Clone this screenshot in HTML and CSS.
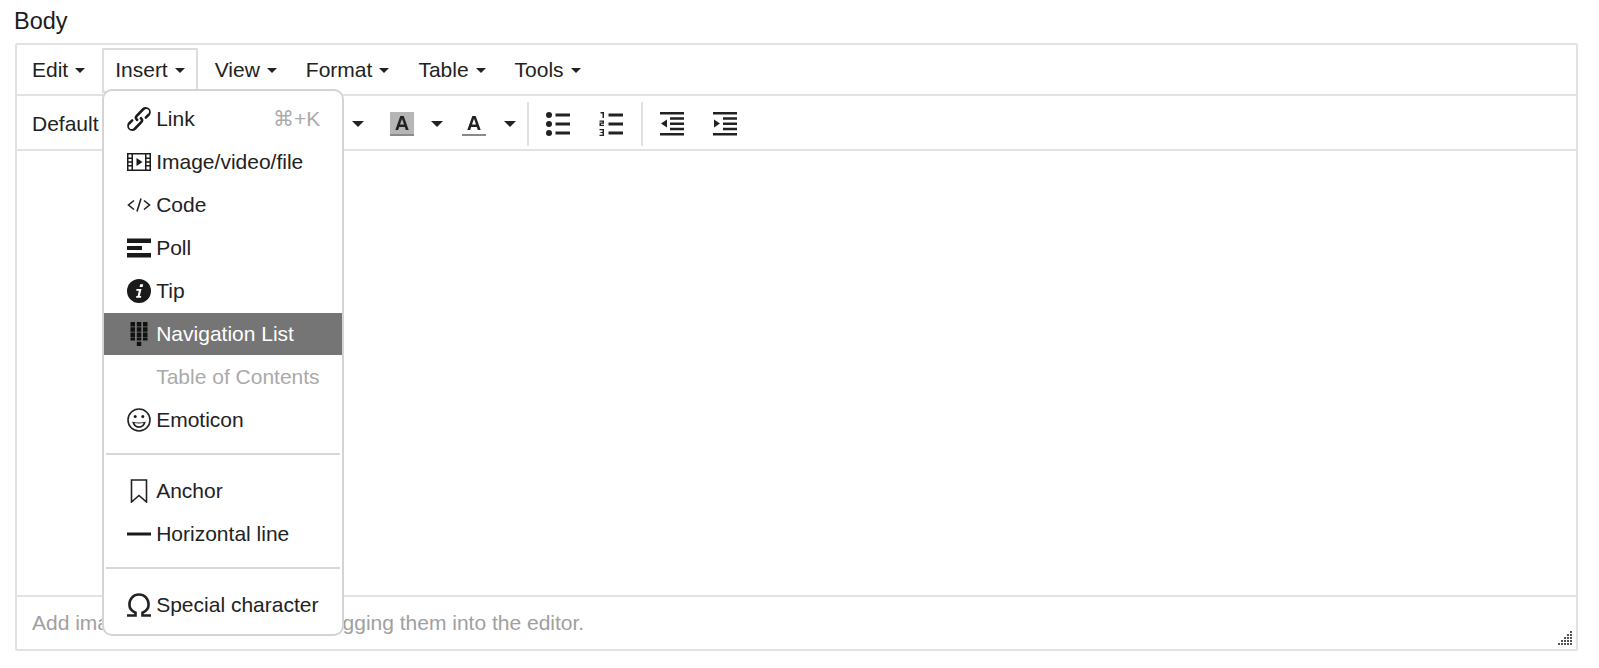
FILE: index.html
```html
<!DOCTYPE html>
<html lang="en">
<head>
<meta charset="utf-8">
<title>Body editor</title>
<link rel="stylesheet" href="styles.css">
</head>
<body>
<label class="field-label">Body</label>
<div class="editor">
  <div class="menubar">
    <button class="mb-btn">Edit<i class="caret"></i></button>
    <div class="mb-wrap">
      <button class="mb-btn active">Insert<i class="caret"></i></button>
      <div class="menu">
        <div class="item"><svg class="ico" viewBox="3 3 18 18"><path d="M6.2 12.3a1 1 0 0 1 1.4 1.4l-2 2a2 2 0 1 0 2.6 2.8l4.8-4.8a1 1 0 0 0 0-1.4 1 1 0 1 1 1.4-1.3 2.9 2.9 0 0 1 0 4L9.6 20a3.9 3.9 0 0 1-5.5-5.5l2-2zm11.6-.6a1 1 0 0 1-1.4-1.4l2-2a2 2 0 1 0-2.6-2.8L11 10.3a1 1 0 0 0 0 1.4A1 1 0 1 1 9.6 13a2.9 2.9 0 0 1 0-4L14.4 4a3.9 3.9 0 0 1 5.5 5.500l-2 2z"/></svg><span class="lbl">Link</span><span class="short">⌘+K</span></div>
        <div class="item"><svg class="ico" viewBox="0 0 24 24"><path fill-rule="evenodd" d="M0 3h24v18H0zM1.5 4.5v3h3v-3zm0 4.5v2.2h3V9zm0 3.7V15h3v-2.3zm0 3.8v3h3v-3zM6 4.5v15h12v-15zm13.500 0v3h3v-3zm0 4.500v2.2h3V9zm0 3.700V15h3v-2.300zm0 3.800v3h3v-3z"/><path d="M9.500 8l6 4-6 4z"/></svg><span class="lbl">Image/video/file</span></div>
        <div class="item"><svg class="ico" viewBox="0 0 24 24"><path class="line" d="M7 7.500l-5.500 4.500 5.500 4.500M17 7.500l5.500 4.500-5.500 4.500M14 5.500l-4 13"/></svg><span class="lbl">Code</span></div>
        <div class="item"><svg class="ico" viewBox="0 0 24 24"><path d="M0 2.500h24v4.500H0zM0 10h15v4H0zM0 17h24v4.500H0z"/></svg><span class="lbl">Poll</span></div>
        <div class="item"><svg class="ico" viewBox="0 0 24 24"><circle cx="12" cy="12" r="12"/><path class="rev" d="M13.200 5.200h3l-.6 2.800h-3zM9.500 10h5l-1.700 7h1.500l-.4 1.800H9l.4-1.800h1.200l1.200-5.200H9.200z"/></svg><span class="lbl">Tip</span></div>
        <div class="item hl"><svg class="ico" viewBox="0 0 24 24"><path d="M3.500 0h4.500v4.500H3.500zM9.800 0h4.500v4.500H9.800zM16 0h4.500v4.500H16zM3.500 5.300h4.500v4.500H3.500zM9.800 5.300h4.500v4.500H9.800zM16 5.300h4.500v4.500H16zM3.500 10.500h4.500v4.500H3.500zM9.800 10.500h4.500v4.500H9.800zM16 10.500h4.500v4.500H16zM3.500 15.500h4.500v3H3.500zM9.800 15.500h4.500v3H9.800zM16 15.500h4.500v3H16zM9.800 19.800h4.500v4.200H9.800z"/></svg><span class="lbl">Navigation List</span></div>
        <div class="item off"><span class="ico"></span><span class="lbl">Table of Contents</span></div>
        <div class="item"><svg class="ico" viewBox="0 0 24 24"><circle class="line" cx="12" cy="12" r="11"/><circle cx="8.200" cy="8.500" r="1.500"/><circle cx="15.800" cy="8.500" r="1.500"/><path d="M5.300 13.500c2 1.300 11.400 1.300 13.400 0-.6 4-3.300 6.300-6.700 6.300s-6.100-2.300-6.700-6.300zm2.200 1.600c.8 2.100 2.400 3.200 4.500 3.200s3.700-1.100 4.500-3.200c-2.500.6-6.500.6-9 0z"/></svg><span class="lbl">Emoticon</span></div>
        <div class="rule"></div>
        <div class="item"><svg class="ico" viewBox="0 0 24 24"><path class="line" d="M4.500 1h15v22l-7.500-6.500L4.500 23z"/></svg><span class="lbl">Anchor</span></div>
        <div class="item"><svg class="ico" viewBox="0 0 24 24"><path d="M0 10.500h24v3H0z"/></svg><span class="lbl">Horizontal line</span></div>
        <div class="rule"></div>
        <div class="item"><svg class="ico" viewBox="0 0 24 24"><path class="line thick" d="M0 22.500h8.500v-2.800C4.500 18 2.400 15 2.400 11.500 2.400 5.700 6.500 1.500 12 1.500s9.600 4.200 9.600 10c0 3.500-2.100 6.500-6.100 8.200v2.800H24"/></svg><span class="lbl">Special character</span></div>
      </div>
    </div>
    <button class="mb-btn">View<i class="caret"></i></button>
    <button class="mb-btn">Format<i class="caret"></i></button>
    <button class="mb-btn">Table<i class="caret"></i></button>
    <button class="mb-btn">Tools<i class="caret"></i></button>
  </div>
  <div class="toolbar">
    <span class="tb-select">Default</span>
    <i class="caret big tb-first"></i>
    <span class="tb-a"><svg class="tb-ico" viewBox="0 0 24 24"><path class="swatch" d="M0 0h24v22H0z"/><path d="M10.300 4h3.400l5 14h-2.900l-1-3H9.200l-1 3H5.300zM10 12.600h4L12 6.800z"/><path class="bar" d="M0 22h24v2.500H0z"/></svg></span>
    <i class="caret big tb-c2"></i>
    <span class="tb-a tb-a2"><svg class="tb-ico" viewBox="0 0 24 24"><path d="M10.300 4h3.400l5 14h-2.900l-1-3H9.200l-1 3H5.300zM10 12.600h4L12 6.800z"/><path class="bar" d="M0 22h24v2.500H0z"/></svg></span>
    <i class="caret big tb-c3"></i>
    <span class="sep sep1"></span>
    <span class="tb-b"><svg class="tb-ico" viewBox="0 0 24 24"><circle cx="3" cy="3" r="3"/><circle cx="3" cy="12" r="3"/><circle cx="3" cy="21" r="3"/><path d="M9.500 1.500H24v3H9.500zM9.500 10.500H24v3H9.500zM9.500 19.500H24v3H9.500z"/></svg></span>
    <span class="tb-b tb-num"><svg class="tb-ico" viewBox="0 0 24 24"><path d="M9.500 1.500H24v3H9.500zM9.500 10.500H24v3H9.500zM9.500 19.500H24v3H9.500z"/><path d="M1.500 0H5v6H3.500V1.500h-2zM.5 8.500H5v3.200H2v1H5V14H.5v-3.500H3.500v-.8H.5zM.5 17H5v7H.5v-1.200h3v-1.700H1.500V20h2v-1.800h-3z"/></svg></span>
    <span class="sep sep2"></span>
    <span class="tb-b tb-out"><svg class="tb-ico" viewBox="0 0 24 24"><path d="M0 0h24v2.500H0zM10 5.200h14v2.500H10zM10 10.500h14V13H10zM10 15.800h14v2.500H10zM0 21h24v2.500H0zM7 7.500v8l-6-4z"/></svg></span>
    <span class="tb-b tb-in"><svg class="tb-ico" viewBox="0 0 24 24"><path d="M0 0h24v2.500H0zM10 5.200h14v2.500H10zM10 10.500h14V13H10zM10 15.800h14v2.500H10zM0 21h24v2.500H0zM1 7.500v8l6-4z"/></svg></span>
  </div>
  <div class="canvas"></div>
  <div class="status">
    <span class="hint">Add image, video and files by dragging them into the editor.</span>
    <svg class="grip" viewBox="0 0 14 14"><path d="M12 0h2v2h-2zM9 3h2v2H9zM12 3h2v2h-2zM9 6h2v2H9zM12 6h2v2h-2zM6 6h2v2H6zM3 9h2v2H3zM6 9h2v2H6zM9 9h2v2H9zM12 9h2v2h-2zM0 12h2v2H0zM3 12h2v2H3zM6 12h2v2H6zM9 12h2v2H9zM12 12h2v2h-2z"/></svg>
  </div>
</div>
</body>
</html>
```

FILE: styles.css
```css
* { box-sizing: border-box; }
html, body { margin: 0; padding: 0; background: #fff; }
body {
  font-family: "Liberation Sans", Arial, sans-serif;
  color: #222;
  font-size: 21px;
  padding: 7px 21px 0 15px;
  height: 668px;
  overflow: hidden;
}
.field-label { display: block; font-size: 23.500px; line-height: 29px; height: 36px; margin-left: -1px; color: #1c1c1c; }
.editor {
  width: 1563px;
  height: 608px;
  border: 2px solid #e2e2e2;
  border-radius: 2px;
  display: flex;
  flex-direction: column;
}
.menubar {
  display: flex;
  align-items: center;
  gap: 3px;
  height: 51px;
  padding: 1px 0 0 2px;
  border-bottom: 2px solid #e2e2e2;
  flex: none;
}
.mb-wrap { position: relative; margin: 0 1px; }
.mb-btn {
  display: flex;
  align-items: center;
  gap: 7px;
  height: 45px;
  padding: 0 12px;
  font: inherit;
  color: #222;
  background: none;
  border: 1px solid transparent;
}
.mb-btn.active { border: 2px solid #ddd; padding: 0 11px; }
.caret {
  display: inline-block;
  width: 0;
  height: 0;
  border-left: 5.500px solid transparent;
  border-right: 5.500px solid transparent;
  border-top: 5.500px solid #222;
}
.caret.big { border-left-width: 6px; border-right-width: 6px; border-top-width: 6px; }
.menu {
  position: absolute;
  left: 0;
  top: 41px;
  width: 242px;
  height: 547px;
  background: #fff;
  border: 2px solid #d4d4d4;
  border-radius: 10px;
  padding: 7px 0 0;
  z-index: 5;
}
.item { display: flex; align-items: center; height: 42px; margin-bottom: 1px; padding: 0 22px 0 23px; }
.ico { width: 24px; height: 24px; flex: none; fill: #1a1a1a; display: block; }
.ico .line { fill: none; stroke: #222; stroke-width: 1.600; }
.ico .thick { stroke-width: 2.600; }
.ico .rev { fill: #fff; }
.lbl { margin-left: 5px; white-space: nowrap; }
.short { margin-left: auto; color: #aaa; }
.item.hl { background: #757575; color: #fff; }
.item.hl .ico { fill: #111; }
.item.off { color: #aaa; }
.rule { height: 2px; background: #d8d8d8; margin: 12px 2px 15px; }
.toolbar {
  display: flex;
  align-items: center;
  height: 55px;
  padding: 2px 0 0 15px;
  border-bottom: 2px solid #e2e2e2;
  flex: none;
}
.tb-select { width: 70px; }
.tb-ico { width: 24px; height: 24px; display: block; fill: #222; }
.tb-ico .swatch { fill: #b5b5b5; }
.tb-ico .bar { fill: #8a8a8a; }
.tb-first { margin-left: 250px; }
.tb-a { margin-left: 26px; }
.tb-c2 { margin-left: 17px; }
.tb-a2 { margin-left: 19px; }
.tb-c3 { margin-left: 18px; }
.sep { width: 2px; height: 44px; background: #e0e0e0; flex: none; }
.sep1 { margin-left: 11px; }
.tb-b { margin-left: 17px; }
.tb-num { margin-left: 29px; }
.sep2 { margin-left: 18px; }
.tb-out { margin-left: 17px; }
.tb-in { margin-left: 29px; }
.canvas { flex: 1; }
.status {
  display: flex;
  justify-content: space-between;
  align-items: center;
  height: 54px;
  padding: 3px 4px 4px 15px;
  border-top: 2px solid #e2e2e2;
  flex: none;
}
.hint { color: #a0a0a0; font-size: 21px; }
.grip { width: 14px; height: 14px; fill: #555; align-self: flex-end; }
```
